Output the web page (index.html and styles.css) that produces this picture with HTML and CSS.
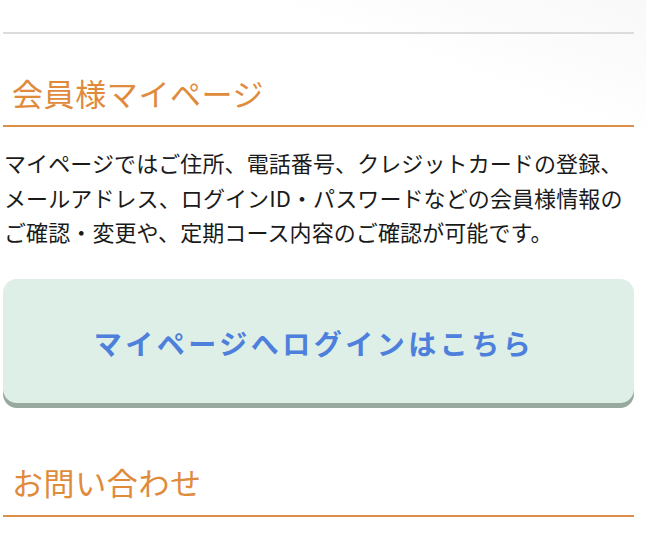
FILE: index.html
```
<!DOCTYPE html>
<html lang="ja">
<head>
<meta charset="utf-8">
<link rel="stylesheet" href="styles.css">
</head>
<body>
<div class="page">
  <div class="topbar"></div>
  <h2 class="heading first">会員様マイページ</h2>
  <p class="desc">マイページではご住所、電話番号、クレジットカードの登録、<br>メールアドレス、ログインID・パスワードなどの会員様情報の<br>ご確認・変更や、定期コース内容のご確認が可能です。</p>
  <a class="login-btn" href="#">マイページへログインはこちら</a>
  <h2 class="heading second">お問い合わせ</h2>
</div>
</body>
</html>
```
FILE: styles.css
```
html, body {
  margin: 0;
  padding: 0;
  background: #ffffff;
}
body {
  font-family: "Noto Sans CJK JP", "Noto Sans", sans-serif;
  width: 646px;
  height: 553px;
  overflow: hidden;
  background: linear-gradient(200deg, #f8f8f8 0%, #ffffff 18%, #ffffff 100%);
}
.page {
  width: 631px;
  margin-left: 3px;
}
.topbar {
  height: 32px;
  border-bottom: 2px solid #dcdcdc;
}
.heading {
  margin: 0;
  font-weight: 400;
  font-size: 31px;
  line-height: 40px;
  letter-spacing: 0.6px;
  color: #e08a3c;
  padding-left: 9px;
  padding-bottom: 12px;
  border-bottom: 2px solid #dd8f4a;
}
.heading.first {
  margin-top: 39px;
}
.heading.second {
  margin-top: 59px;
  padding-bottom: 13px;
}
.desc {
  margin: 18px 0 0 1px;
  font-size: 22px;
  line-height: 34.5px;
  color: #1a1a1a;
  letter-spacing: 0.1px;
  white-space: nowrap;
}
.login-btn {
  display: flex;
  align-items: center;
  justify-content: center;
  box-sizing: border-box;
  margin-top: 30px;
  height: 124px;
  padding-top: 4px;
  padding-right: 9px;
  background: #ddefe6;
  border-radius: 14px;
  box-shadow: 0 5px 0 #98a99f;
  color: #4d80dc;
  font-weight: 700;
  font-size: 28px;
  letter-spacing: 3.5px;
  text-decoration: none;
}
```
